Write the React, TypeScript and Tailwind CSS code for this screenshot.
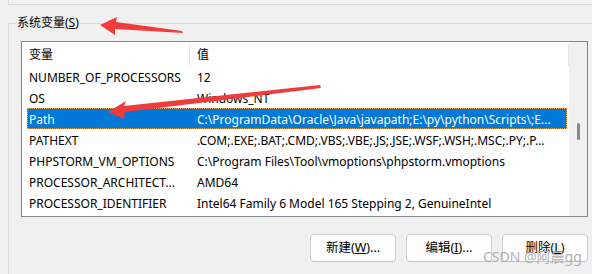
import React from "react";

const rows = [
  { name: "NUMBER_OF_PROCESSORS", value: "12" },
  { name: "OS", value: "Windows_NT" },
  { name: "Path", value: "C:\\ProgramData\\Oracle\\Java\\javapath;E:\\py\\python\\Scripts\\;E...", selected: true },
  { name: "PATHEXT", value: ".COM;.EXE;.BAT;.CMD;.VBS;.VBE;.JS;.JSE;.WSF;.WSH;.MSC;.PY;.P..." },
  { name: "PHPSTORM_VM_OPTIONS", value: "C:\\Program Files\\Tool\\vmoptions\\phpstorm.vmoptions" },
  { name: "PROCESSOR_ARCHITECT...", value: "AMD64" },
  { name: "PROCESSOR_IDENTIFIER", value: "Intel64 Family 6 Model 165 Stepping 2, GenuineIntel" },
  { name: "PROCESSOR_LEVEL", value: "6" },
];

function Button({ label, hotkey, suffix }: { label: string; hotkey: string; suffix: string }) {
  return (
    <button className="h-[28px] w-[86px] rounded-[4px] border border-[#d0d0d0] border-b-[#c4c4c4] bg-[#fdfdfd] text-[12.5px] text-black">
      {label}(<span className="underline">{hotkey}</span>){suffix}
    </button>
  );
}

export default function App() {
  return (
    <div className="relative w-[592px] h-[274px] overflow-hidden bg-[#f0f0f0] font-['Noto_Sans','Noto_Sans_CJK_SC',sans-serif] text-[12px] text-black">
      <div className="ml-[8px] h-[5px] border-l border-b border-[#dadada]" />

      <fieldset className="ml-[8px] mt-[10px] w-[620px] h-[300px] border-l border-t border-[#dadada] pl-[7px]">
        <legend className="px-[1px] leading-[16px]">
          系统变量(<span className="underline">S</span>)
        </legend>

        <div className="ml-[5px] mt-[10px] w-[567px] h-[176px] border border-[#828790] bg-white flex overflow-hidden">
          <div className="w-[547px] flex flex-col">
            <div className="ml-[5px] h-[24px] shrink-0 flex items-center pt-[2px]">
              <div className="w-[163px] pl-[2px] h-full flex items-center border-r border-[#e5e5e5]">变量</div>
              <div className="flex-1 pl-[7px] h-full flex items-center border-r border-[#e5e5e5]">值</div>
            </div>
            {rows.map((r) => (
              <div
                key={r.name}
                className={
                  r.selected
                    ? "ml-[5px] w-[540px] h-[21px] shrink-0 flex items-center pt-[2px] bg-[#0078d7] text-white outline outline-1 outline-dotted outline-[#e8a45a] -outline-offset-1"
                    : "ml-[5px] w-[540px] h-[21px] shrink-0 flex items-center pt-[2px]"
                }
              >
                <div className="w-[163px] pl-[2px] whitespace-nowrap overflow-hidden">{r.name}</div>
                <div className="flex-1 pl-[7px] whitespace-nowrap overflow-hidden">{r.value}</div>
              </div>
            ))}
          </div>
          <div className="w-[18px] bg-[#f0f0f0] pt-[81px] pl-[8px]">
            <div className="w-[3px] h-[17px] rounded-full bg-[#8a8a8a]" />
          </div>
        </div>

        <div className="w-[572px] mt-[17px] flex justify-end gap-[10px]">
          <Button label="新建" hotkey="W" suffix="..." />
          <Button label="编辑" hotkey="I" suffix="..." />
          <Button label="删除" hotkey="L" suffix="" />
        </div>
      </fieldset>

      <div className="absolute left-[483px] top-[246px] text-[14px] text-[#a8a8a8]/90">CSDN @阿晨gg</div>

      <svg className="absolute inset-0 pointer-events-none" width="592" height="274" viewBox="0 0 592 274">
        <polygon points="100,25 117,17 116,22 182,31 183,33 115,29 115,35" fill="#ef3b3b" />
        <polygon points="108,112 126,101 124,106 320,85 321,88 125,112 124,119" fill="#ef3b3b" />
      </svg>
    </div>
  );
}
